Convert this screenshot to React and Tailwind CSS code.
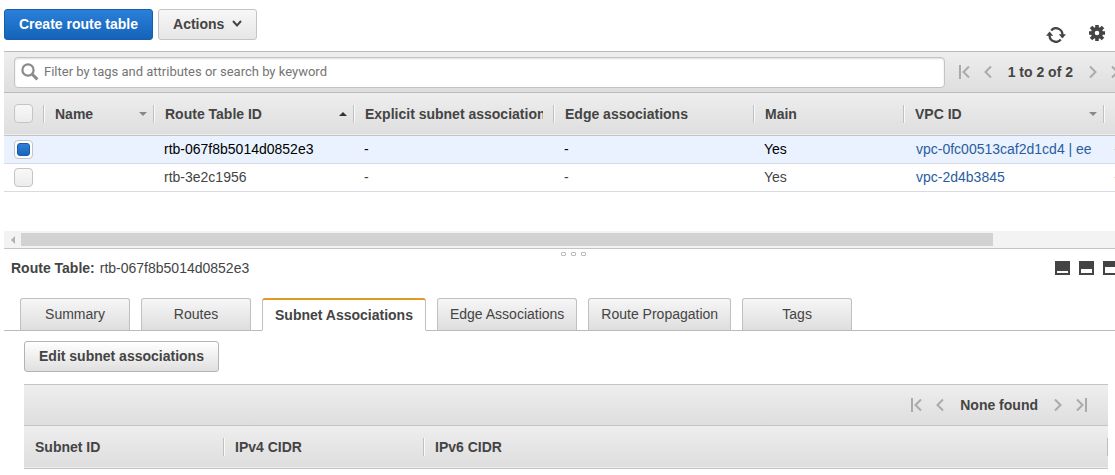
import React, { useState } from 'react'
import clsx from 'clsx'

const COLUMNS = [
  { label: 'Name', width: 'w-[110px]', sort: 'desc' },
  { label: 'Route Table ID', width: 'w-[200px]', sort: 'asc' },
  { label: 'Explicit subnet associations', width: 'w-[200px]' },
  { label: 'Edge associations', width: 'w-[200px]' },
  { label: 'Main', width: 'w-[150px]' },
  { label: 'VPC ID', width: 'w-[200px]', sort: 'desc' },
]

const ROUTE_TABLES = [
  { id: 'rtb-067f8b5014d0852e3', explicit: '-', edge: '-', main: 'Yes', vpc: 'vpc-0fc00513caf2d1cd4 | ee' },
  { id: 'rtb-3e2c1956', explicit: '-', edge: '-', main: 'Yes', vpc: 'vpc-2d4b3845' },
]

const TABS = ['Summary', 'Routes', 'Subnet Associations', 'Edge Associations', 'Route Propagation', 'Tags']

function RefreshIcon() {
  return (
    <svg width="20" height="16" viewBox="0 0 20 16" fill="none" stroke="#444" strokeWidth="2.3">
      <path d="M5.2 3.4A6.4 6.4 0 0 1 16.4 8" />
      <path d="M14.8 12.6A6.4 6.4 0 0 1 3.6 8" />
      <path d="M12.8 7.2H20l-3.6 4.2z" fill="#444" stroke="none" />
      <path d="M0 8.8h7.2L3.6 4.6z" fill="#444" stroke="none" />
    </svg>
  )
}

function GearIcon() {
  return (
    <svg width="16" height="16" viewBox="0 0 16 16" fill="none" stroke="#444">
      <g strokeWidth="3.6">
        <path d="M8 0v4M8 12v4M0 8h4M12 8h4" />
        <path d="M2 2l2.6 2.6M11.4 11.4L14 14M2 14l2.6-2.6M11.4 4.6L14 2" />
      </g>
      <circle cx="8" cy="8" r="4.2" strokeWidth="3.8" />
    </svg>
  )
}

function SearchIcon() {
  return (
    <svg width="18" height="18" viewBox="0 0 18 18" fill="none" stroke="#8a8a8a">
      <circle cx="7" cy="7" r="5.6" strokeWidth="2.2" />
      <path d="M11.2 11.2l5.2 5.2" strokeWidth="3" />
    </svg>
  )
}

function Arrow({ end, flip }) {
  return (
    <svg
      width={end ? 11 : 8}
      height="14"
      viewBox={end ? '0 0 11 14' : '3 0 8 14'}
      fill="none"
      stroke="#aaa"
      strokeWidth="2"
      className={clsx('shrink-0', flip && 'rotate-180')}
    >
      {end && <path d="M1 0v14" />}
      <path d="M10 1.5L4.5 7l5.5 5.5" />
    </svg>
  )
}

function SortMark({ dir }) {
  return (
    <svg width="8" height="4" viewBox="0 0 8 4" className="shrink-0">
      {dir === 'asc' ? <path d="M0 4h8L4 0z" fill="#333" /> : <path d="M0 0h8L4 4z" fill="#888" />}
    </svg>
  )
}

function Pager({ label, className }) {
  return (
    <div className={clsx('flex shrink-0 items-center', className)}>
      <button aria-label="First page"><Arrow end /></button>
      <button aria-label="Previous page" className="ml-[14px]"><Arrow /></button>
      <span className="mx-4 font-bold">{label}</span>
      <button aria-label="Next page" className="mr-[14px]"><Arrow flip /></button>
      <button aria-label="Last page"><Arrow end flip /></button>
    </div>
  )
}

function Check({ label, checked, onChange }) {
  return (
    <span className="relative flex size-[19px]">
      <input
        type="checkbox"
        aria-label={label}
        checked={checked}
        onChange={onChange}
        className="peer size-[19px] appearance-none rounded border border-[#c4c4c4] bg-linear-to-b from-[#f8f8f8] to-[#ececec] checked:from-white checked:to-white"
      />
      <span className="pointer-events-none absolute inset-[3px] hidden rounded-[3px] border border-[#1a5ba8] bg-linear-to-b from-[#2e80d8] to-[#1568bd] peer-checked:block" />
    </span>
  )
}

function HeadCell({ children, sort }) {
  return (
    <th className="h-[42px] p-0 text-left font-bold">
      <div className="flex h-[18px] items-center border-r border-[#c0c0c0] pr-[10px] pl-[11px] shadow-[1px_0_0_#fafafa]">
        <span className="min-w-0 flex-1 overflow-hidden whitespace-nowrap">{children}</span>
        {sort && <span className="-mr-1"><SortMark dir={sort} /></span>}
      </div>
    </th>
  )
}

function PaneIcon({ label, bar }) {
  return (
    <button aria-label={label} className="shrink-0">
      <svg width="15" height="14" viewBox="0 0 15 14">
        <path d="M0 0h15v14H0z" fill="#444" />
        <path d={bar} fill="#fff" />
      </svg>
    </button>
  )
}

export default function App() {
  const [selected, setSelected] = useState([ROUTE_TABLES[0].id])
  const [tab, setTab] = useState('Subnet Associations')
  const [filter, setFilter] = useState('')

  const toggle = (id) =>
    setSelected(s => (s.includes(id) ? s.filter(x => x !== id) : [...s, id]))

  const toggleAll = () =>
    setSelected(s => (s.length === ROUTE_TABLES.length ? [] : ROUTE_TABLES.map(r => r.id)))

  return (
    <div className="overflow-hidden bg-white pl-1 font-['Liberation_Sans',Arial,sans-serif] text-sm leading-[18px] text-[#444]">
      <header className="flex items-start gap-[5px] pt-[9px] pb-2">
        <button className="h-[31px] rounded-[3px] border border-[#1a5da8] bg-linear-to-b from-[#2a80db] to-[#1463b8] px-[14px] pb-[2px] font-bold text-white">
          Create route table
        </button>
        <button className="flex h-[31px] items-center gap-2 rounded-[3px] border border-[#c4c4c4] bg-linear-to-b from-[#f7f7f7] to-[#e6e6e6] px-[14px] pb-[2px] font-bold">
          Actions
          <svg width="10" height="7" viewBox="0 0 10 7" fill="none" stroke="#444" strokeWidth="2">
            <path d="M1 1l4 4.4L9 1" />
          </svg>
        </button>
        <div className="ml-auto flex items-start gap-[23px] self-end pt-4 pr-[10px]">
          <button aria-label="Refresh" className="pt-[2px]"><RefreshIcon /></button>
          <button aria-label="Settings"><GearIcon /></button>
        </div>
      </header>

      <section>
        <div className="-mr-[7px] flex h-[42px] items-center border-y border-[#bbb] bg-linear-to-b from-[#eee] to-[#dedede] pl-[10px]">
          <label className="flex h-[31px] min-w-0 flex-1 items-center gap-[5px] rounded border border-[#c4c4c4] bg-white pl-[6px] shadow-[inset_0_1px_2px_#ddd]">
            <SearchIcon />
            <input
              type="text"
              aria-label="Filter"
              value={filter}
              onChange={e => setFilter(e.target.value)}
              placeholder="Filter by tags and attributes or search by keyword"
              className="min-w-0 flex-1 bg-transparent font-[Roboto,'Liberation_Sans',sans-serif] text-[13px] outline-none placeholder:text-[#757575]"
            />
          </label>
          <Pager label="1 to 2 of 2" className="ml-[14px]" />
        </div>

        <div className="h-[138px] overflow-hidden">
          <table className="w-[1200px] table-fixed border-collapse">
            <colgroup>
              <col className="w-[40px]" />
              {COLUMNS.map(c => <col key={c.label} className={c.width} />)}
              <col />
            </colgroup>
            <thead>
              <tr className="border-b border-[#c4c4c4] bg-linear-to-b from-[#eee] to-[#dedede]">
                <th className="p-0">
                  <div className="flex h-[18px] items-center border-r border-[#c0c0c0] pl-[10px] shadow-[1px_0_0_#fafafa]">
                    <Check
                      label="Select all route tables"
                      checked={selected.length === ROUTE_TABLES.length}
                      onChange={toggleAll}
                    />
                  </div>
                </th>
                {COLUMNS.map(c => <HeadCell key={c.label} sort={c.sort}>{c.label}</HeadCell>)}
                <th />
              </tr>
            </thead>
            <tbody>
              {ROUTE_TABLES.map(r => (
                <tr
                  key={r.id}
                  className={clsx(
                    'h-[28px] border-b border-[#d8dce2] *:py-0 *:pr-0 *:pl-[10px]',
                    selected.includes(r.id) && 'bg-[#e9f2fe] text-black'
                  )}
                >
                  <td>
                    <Check label={r.id} checked={selected.includes(r.id)} onChange={() => toggle(r.id)} />
                  </td>
                  <td />
                  <td>{r.id}</td>
                  <td>{r.explicit}</td>
                  <td>{r.edge}</td>
                  <td>{r.main}</td>
                  <td className="whitespace-nowrap">
                    <a href="#vpc" className="pl-[2px] text-[#2a5d9f]">{r.vpc}</a>
                  </td>
                  <td className="text-[#a3b59b]">-</td>
                </tr>
              ))}
            </tbody>
          </table>
        </div>

        <div className="flex h-[18px] border-b border-[#c4c4c4] bg-[#f3f3f3] py-[2px]">
          <div className="flex w-[17px] shrink-0 items-center justify-center">
            <svg width="4" height="8" viewBox="0 0 4 8"><path d="M4 0v8L0 4z" fill="#b0b0b0" /></svg>
          </div>
          <div className="min-w-0 flex-1">
            <div className="h-full w-8/9 bg-[#d2d2d2]" />
          </div>
        </div>
      </section>

      <section>
        <div className="flex h-[10px] items-center justify-center gap-[5px] pl-7">
          <span className="h-1 w-[5px] rounded-[1px] border border-[#bbb]" />
          <span className="h-1 w-[5px] rounded-[1px] border border-[#bbb]" />
          <span className="h-1 w-[5px] rounded-[1px] border border-[#bbb]" />
        </div>

        <div className="-mr-2 flex items-center gap-[5px] pl-[7px]">
          <h2 className="font-bold">Route Table:</h2>
          <span>{selected[0]}</span>
          <div className="ml-auto flex gap-[9px] pr-[5px]">
            <PaneIcon label="Minimize details" bar="M2 10h11v2H2z" />
            <PaneIcon label="Split details" bar="M2 8h11v4H2z" />
            <PaneIcon label="Maximize details" bar="M2 6h11v6H2z" />
          </div>
        </div>

        <div role="tablist" className="mt-[21px] flex items-end gap-[11px] border-b border-[#bbb] pl-4">
          {TABS.map(t => (
            <button
              key={t}
              role="tab"
              aria-selected={tab === t}
              onClick={() => setTab(t)}
              className={clsx(
                'min-w-[110px] rounded-t-[3px] border border-[#c0c0c0] px-3 whitespace-nowrap',
                tab === t
                  ? '-mb-px h-[33px] border-t-2 border-t-[#e09a2b] border-b-white bg-white font-bold'
                  : 'h-8 border-b-0 bg-linear-to-b from-[#f6f6f6] to-[#dedede] pb-[2px]'
              )}
            >
              {t}
            </button>
          ))}
        </div>

        <div role="tabpanel" className="pt-[10px] pr-[7px] pl-5">
          <button className="h-[31px] rounded-[3px] border border-[#b4b4b4] bg-linear-to-b from-white to-[#e0e0e0] px-[14px] pb-[2px] font-bold">
            Edit subnet associations
          </button>
          <div className="mt-3 flex h-[42px] items-center justify-end border-y border-[#c4c4c4] bg-linear-to-b from-[#eee] to-[#dedede] pr-[21px]">
            <Pager label="None found" />
          </div>
          <table className="w-full table-fixed border-collapse">
            <colgroup>
              <col className="w-[200px]" />
              <col className="w-[200px]" />
              <col />
            </colgroup>
            <thead>
              <tr className="border-b border-[#c4c4c4] bg-linear-to-b from-[#eee] to-[#dedede]">
                <HeadCell>Subnet ID</HeadCell>
                <HeadCell>IPv4 CIDR</HeadCell>
                <HeadCell>IPv6 CIDR</HeadCell>
              </tr>
            </thead>
          </table>
        </div>
      </section>
    </div>
  )
}
